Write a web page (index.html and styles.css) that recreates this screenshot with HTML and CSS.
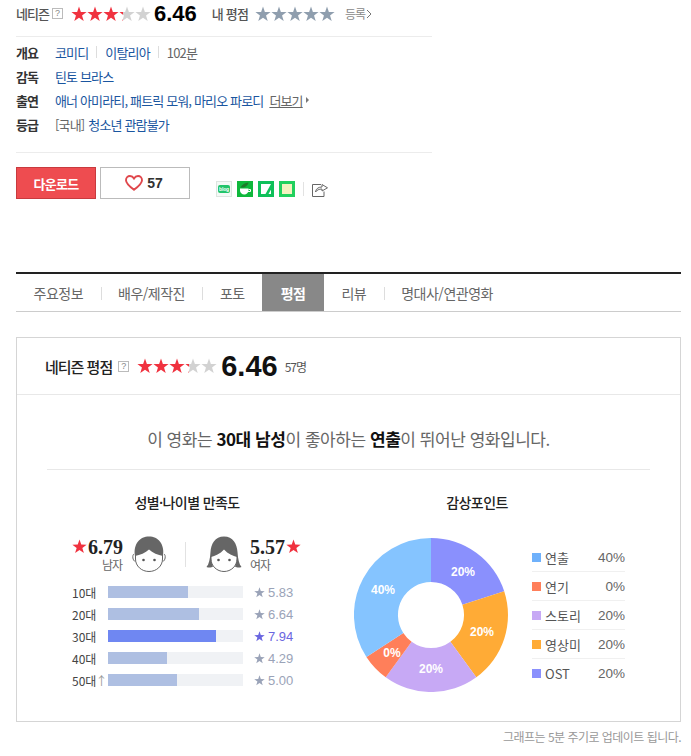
FILE: index.html
```html
<!DOCTYPE html>
<html lang="ko">
<head>
<meta charset="utf-8">
<title>틴토 브라스</title>
<link rel="stylesheet" href="styles.css">
</head>
<body>
<svg class="defs" width="0" height="0" aria-hidden="true">
  <defs>
    <path id="five" d="M8 .5l1.88 5.41 5.72.12-4.56 3.46 1.66 5.48-4.7-3.27-4.7 3.27 1.66-5.48-4.56-3.46 5.72-.12zm16 0l1.88 5.41 5.72.12-4.56 3.46 1.66 5.48-4.7-3.27-4.7 3.27 1.66-5.48-4.56-3.46 5.72-.12zm16 0l1.88 5.41 5.72.12-4.56 3.46 1.66 5.48-4.7-3.27-4.7 3.27 1.66-5.48-4.56-3.46 5.72-.12zm16 0l1.88 5.41 5.72.12-4.56 3.46 1.66 5.48-4.7-3.27-4.7 3.27 1.66-5.48-4.56-3.46 5.72-.12zm16 0l1.88 5.41 5.72.12-4.56 3.46 1.66 5.48-4.7-3.27-4.7 3.27 1.66-5.48-4.56-3.46 5.72-.12z"/>
    <path id="one" d="M8 .5l1.88 5.41 5.72.12-4.56 3.46 1.66 5.48-4.7-3.27-4.7 3.27 1.66-5.48-4.56-3.46 5.72-.12z"/>
    <linearGradient id="rate"><stop offset=".646" stop-color="#f0323f"/><stop offset=".646" stop-color="#d2d2d2"/></linearGradient>
  </defs>
</svg>
<main class="page">
  <section class="top">
    <div class="scores">
      <span class="lbl">네티즌</span><span class="q">?</span>
      <svg class="stars" viewBox="0 0 80 16"><use href="#five" fill="url(#rate)"/></svg>
      <strong class="num">6.46</strong>
      <span class="lbl my">내 평점</span>
      <svg class="stars my-stars" viewBox="0 0 80 16"><use href="#five" fill="#8f9eae"/></svg>
      <a class="reg">등록<svg class="chev" viewBox="0 0 6 10" width="6" height="10"><path d="M1 1l4 4-4 4" fill="none" stroke="#777"/></svg></a>
    </div>
    <dl class="info">
      <div class="row"><dt>개요</dt><dd><a>코미디</a><i></i><a>이탈리아</a><i></i><span>102분</span></dd></div>
      <div class="row"><dt>감독</dt><dd><a>틴토 브라스</a></dd></div>
      <div class="row"><dt>출연</dt><dd><a>애너 아미라티, 패트릭 모워, 마리오 파로디</a><u class="more">더보기</u><span class="tri"></span></dd></div>
      <div class="row"><dt>등급</dt><dd><span>[국내]</span> <a>청소년 관람불가</a></dd></div>
    </dl>
    <div class="actions">
      <button class="down">다운로드</button>
      <button class="like"><svg viewBox="0 0 18 16" width="18" height="16"><path d="M9 14.800C4 11 1 8.400 1 5.200 1 2.800 2.800 1 5 1c1.700 0 3.100.9 4 2.400C9.900 1.900 11.300 1 13 1c2.200 0 4 1.800 4 4.200 0 3.200-3 5.800-8 9.600z" fill="none" stroke="#e0474c" stroke-width="1.900"/></svg><b>57</b></button>
      <div class="sns">
        <span class="ic blog"><span>blog</span></span>
        <span class="ic"><svg viewBox="0 0 16 16"><rect width="16" height="16" fill="#0fb83c"/><path d="M3 7.500h8.500v2a4.250 4 0 0 1-8.500 0z" fill="#fff"/><path d="M11.500 8.500h2v2h-2.500" fill="none" stroke="#fff"/><path d="M3.500 6.500C5 3.500 8 2 11.500 1.500 11 4.500 8 7 3.500 6.500z" fill="#1f7a2c"/></svg></span>
        <span class="ic"><svg viewBox="0 0 16 16"><rect width="16" height="16" fill="#0fc05a"/><rect x="3" y="3" width="10" height="10" fill="#fff"/><path d="M13 3L7.500 13H10.500L13 8.500z" fill="#0fc05a"/></svg></span>
        <span class="ic"><svg viewBox="0 0 16 16"><rect width="16" height="16" fill="#22d05e"/><rect x="3" y="3" width="10" height="10" fill="#f4f2c0"/></svg></span>
        <i class="sep"></i>
        <svg class="share" viewBox="0 0 16 16" width="16" height="16"><path d="M9 3.500H.5v12h11.500v-5" fill="none" stroke="#666"/><path d="M3.500 11c.5-3.500 3-5 6.500-5V3.500L15.500 6.800 10 10V8c-3 0-5 1-6.500 3z" fill="#fff" stroke="#666"/></svg>
      </div>
    </div>
  </section>

  <nav class="tabs">
    <a>주요정보</a><a class="sp">배우/제작진</a><a class="sp">포토</a><a class="on">평점</a><a>리뷰</a><a class="sp">명대사/연관영화</a>
  </nav>

  <section class="panel">
    <header class="phead">
      <h2>네티즌 평점</h2><span class="q q2">?</span>
      <svg class="stars" viewBox="0 0 80 16"><use href="#five" fill="url(#rate)"/></svg>
      <strong class="big">6.46</strong><span class="cnt">57명</span>
    </header>
    <div class="pbody">
      <p class="lead">이 영화는 <b>30대 남성</b>이 좋아하는 <b>연출</b>이 뛰어난 영화입니다.</p>
      <div class="charts">
        <div class="demo">
          <h3>성별·나이별 만족도</h3>
          <div class="gender">
            <div class="g g-m">
              <div class="gtxt"><div class="gscore"><svg viewBox="0 0 16 16" width="15" height="15"><use href="#one" fill="#f0323f"/></svg><b>6.79</b></div><small>남자</small></div>
              <svg class="face" viewBox="0 0 34 36" width="34" height="36"><path d="M2 18c-2 1-1.500 7 1.500 7.500M32 18c2 1 1.500 7-1.500 7.500" fill="none" stroke="#666"/><path d="M3.500 18v5c0 7 6 12.500 13.500 12.500S30.500 30 30.500 23v-5" fill="#fff" stroke="#666"/><path d="M3 20C1 8 8 .5 17 .5S33 8 31 20c-5-1-10.500-3-14-6.500C13.500 17 8 19 3 20z" fill="#666"/><circle cx="11.500" cy="24" r="1.300" fill="#555"/><circle cx="22.500" cy="24" r="1.300" fill="#555"/></svg>
            </div>
            <i class="gdiv"></i>
            <div class="g g-f">
              <svg class="face" viewBox="0 0 36 36" width="36" height="36"><path d="M5 20v3c0 7 6 12.500 13 12.500S31 30 31 23v-3" fill="#fff" stroke="#666"/><path d="M18 .5C9 .5 5 8 4.500 16 4 23 3 28 .5 31c2.500 1 5 .5 6.500-.5C5.500 27 5 24 5 21c4-1 9-3 13-7.500 4 4.500 9 6.500 13 7.500 0 3-.5 6-2 9.500 1.500 1 4 1.500 6.500.5-2.500-3-3.500-8-4-15C31 8 27 .5 18 .5z" fill="#666"/><circle cx="12.500" cy="24" r="1.300" fill="#555"/><circle cx="23.500" cy="24" r="1.300" fill="#555"/></svg>
              <div class="gtxt"><div class="gscore"><b>5.57</b><svg viewBox="0 0 16 16" width="15" height="15"><use href="#one" fill="#f0323f"/></svg></div><small>여자</small></div>
            </div>
          </div>
          <ul class="bars">
            <li><span class="age">10대</span><span class="track"><span class="fill" style="width:59.300%"></span></span><span class="val"><svg viewBox="0 0 16 16" width="11" height="11"><use href="#one" fill="currentColor"/></svg>5.83</span></li>
            <li><span class="age">20대</span><span class="track"><span class="fill" style="width:67.400%"></span></span><span class="val"><svg viewBox="0 0 16 16" width="11" height="11"><use href="#one" fill="currentColor"/></svg>6.64</span></li>
            <li class="best"><span class="age">30대</span><span class="track"><span class="fill" style="width:80%"></span></span><span class="val"><svg viewBox="0 0 16 16" width="11" height="11"><use href="#one" fill="currentColor"/></svg>7.94</span></li>
            <li><span class="age">40대</span><span class="track"><span class="fill" style="width:43.700%"></span></span><span class="val"><svg viewBox="0 0 16 16" width="11" height="11"><use href="#one" fill="currentColor"/></svg>4.29</span></li>
            <li><span class="age">50대<em>↑</em></span><span class="track"><span class="fill" style="width:51.100%"></span></span><span class="val"><svg viewBox="0 0 16 16" width="11" height="11"><use href="#one" fill="currentColor"/></svg>5.00</span></li>
          </ul>
        </div>
        <div class="points">
          <h3>감상포인트</h3>
          <div class="pie-wrap">
            <svg class="pie" viewBox="-77 -77 154 154" width="154" height="154">
              <path d="M0-77A77 77 0 0 1 73.200-23.800L31.400-10.200A33 33 0 0 0 0-33z" fill="#8a90fd"/>
              <path d="M73.200-23.800A77 77 0 0 1 45.300 62.300L19.400 26.700A33 33 0 0 0 31.400-10.200z" fill="#ffab36"/>
              <path d="M45.300 62.300A77 77 0 0 1-45.300 62.300L-19.400 26.700A33 33 0 0 0 19.400 26.700z" fill="#c7a9f5"/>
              <path d="M-45.300 62.300A77 77 0 0 1-64.600 42L-27.700 18A33 33 0 0 0-19.400 26.700z" fill="#ff7f5a"/>
              <path d="M-64.600 42A77 77 0 0 1 0-77L0-33A33 33 0 0 0-27.700 18z" fill="#85c4ff"/>
              <g class="pl">
                <text x="32" y="-39">20%</text>
                <text x="51" y="21">20%</text>
                <text x="0" y="58">20%</text>
                <text x="-39" y="42">0%</text>
                <text x="-48" y="-21">40%</text>
              </g>
            </svg>
            <ul class="legend">
              <li><i class="c1"></i><span>연출</span><b>40%</b></li>
              <li><i class="c2"></i><span>연기</span><b>0%</b></li>
              <li><i class="c3"></i><span>스토리</span><b>20%</b></li>
              <li><i class="c4"></i><span>영상미</span><b>20%</b></li>
              <li><i class="c5"></i><span>OST</span><b>20%</b></li>
            </ul>
          </div>
        </div>
      </div>
    </div>
  </section>
  <p class="note">그래프는 5분 주기로 업데이트 됩니다.</p>
</main>
</body>
</html>
```
FILE: styles.css
```css
* { box-sizing: border-box; }
html, body { margin: 0; padding: 0; background: #fff; }
body { font-family: "Noto Sans CJK KR", "Liberation Sans", sans-serif; font-size: 13px; color: #333; letter-spacing: -1px; }
.defs { position: absolute; }
.page { width: 665px; margin-left: 16px; }
a { color: #1a56a0; }
h2, h3, p, ul, dl, dd { margin: 0; padding: 0; }
ul { list-style: none; }
i { font-style: normal; }

.top { width: 416px; height: 272px; }
.scores { display: flex; align-items: center; height: 37px; padding-bottom: 9px; border-bottom: 1px solid #ececec; }
.lbl { color: #555; font-weight: 500; line-height: 18px; }
.q { width: 11px; height: 11px; margin-left: 3px; border: 1px solid #bbb; color: #888; font: 9px/9px "Liberation Sans", sans-serif; letter-spacing: 0; text-align: center; }
.stars { width: 80px; height: 16px; margin-left: 8px; flex: none; }
.num { margin-left: 3px; font: bold 22px/24px "Liberation Sans", sans-serif; letter-spacing: 0; color: #000; }
.my { margin-left: 15px; letter-spacing: -.8px; }
.my-stars { margin-left: 7px; }
.reg { margin-left: 10px; color: #888; font-size: 12px; display: flex; align-items: center; gap: 1px; }
.chev { margin-top: 1px; }

.info { height: 116px; padding-top: 3px; margin: 0; border-bottom: 1px solid #ececec; }
.row { display: flex; height: 24px; align-items: center; }
dt { width: 39px; font-weight: 700; color: #333; }
dd { display: flex; align-items: center; gap: 4px; color: #666; letter-spacing: -.85px; }
dd i { width: 1px; height: 12px; margin: 0 4px; background: #ddd; }
.more { margin-left: 2px; color: #666; }
.tri { width: 0; height: 0; margin-left: -1px; border-left: 3px solid #777; border-top: 3px solid transparent; border-bottom: 3px solid transparent; }

.actions { display: flex; margin-top: 14px; height: 32px; }
.actions button { font-family: inherit; cursor: pointer; padding: 0; }
.down { width: 80px; height: 32px; background: #ee4c50; border: 1px solid #c83a3e; color: #fff; font-size: 13px; font-weight: 700; letter-spacing: -.7px; }
.like { display: flex; align-items: center; justify-content: center; gap: 4px; width: 90px; height: 32px; margin-left: 4px; background: #fff; border: 1px solid #bbb; }
.actions .like { padding: 0 2px 0 0; }
.like b { font: bold 14px "Liberation Sans", sans-serif; letter-spacing: 0; color: #333; }
.sns { display: flex; align-items: center; gap: 5px; margin: 14px 0 0 26px; height: 16px; }
.ic { display: block; width: 16px; height: 16px; }
.ic svg { display: block; width: 16px; height: 16px; }
.blog { display: flex; align-items: center; justify-content: center; border: 1px solid #dde5e0; background: #f4f9f6; }
.blog span { display: block; width: 12px; height: 8px; border-radius: 2px; background: #22c46a; color: #fff; font: bold 5px/8px "Liberation Sans", sans-serif; letter-spacing: -.2px; text-align: center; }
.sep { width: 1px; height: 14px; margin: 0 3px; background: #e2e2e2; }
.share { display: block; }

.tabs { display: flex; height: 40px; border-top: 2px solid #222; border-bottom: 1px solid #ccc; }
.tabs a { display: flex; align-items: center; height: 37px; padding: 0 17.5px; font-size: 14px; color: #666; position: relative; letter-spacing: -.5px; }
.tabs .sp::before { content: ""; position: absolute; left: 0; top: 13px; width: 1px; height: 13px; background: #ddd; }
.tabs .on { background: #888; color: #fff; font-weight: 700; padding: 0 18.5px; }

.panel { margin-top: 25px; height: 385px; border: 1px solid #d5d5d5; }
.phead { display: flex; align-items: center; height: 57px; padding-left: 28px; border-bottom: 1px solid #e8e8e8; }
h2 { font-size: 15px; font-weight: 500; color: #222; letter-spacing: -1px; }
.q2 { margin-left: 6px; }
.phead .stars { margin-left: 8px; }
.big { margin-left: 4px; font: bold 29px/32px "Liberation Sans", sans-serif; letter-spacing: 0; color: #111; }
.cnt { margin-left: 7px; font-size: 12px; color: #555; }

.pbody { padding: 0 30px; }
.lead { height: 75px; padding-top: 29px; text-align: center; font-size: 17px; line-height: 30px; color: #666; letter-spacing: -.46px; border-bottom: 1px solid #e8e8e8; }
.lead b { color: #111; }
.charts { display: flex; }
.demo { width: 250px; margin-left: 0; }
h3 { margin-top: 22px; font-size: 14px; font-weight: 500; line-height: 20px; color: #222; text-align: center; letter-spacing: -.6px; }
.demo h3 { margin-right: 0; width: 280px; }
.gender { display: flex; align-items: center; width: 230px; height: 36px; margin: 24px 0 0 25px; }
.g { display: flex; align-items: center; }
.gtxt { width: 52px; }
.gscore { display: flex; align-items: center; gap: 1px; }
.gscore b { font: bold 20px/20px "Liberation Serif", serif; letter-spacing: 0; color: #222; }
.gtxt small { display: block; font-size: 12px; line-height: 15px; color: #666; }
.g-m .gtxt { text-align: right; width: 51px; }
.g-m small { padding-right: 1px; }
.g-m .gscore { justify-content: flex-end; }
.g-m .face { margin-left: 9px; }
.g-f .face { margin-right: 8px; }
.gdiv { width: 1px; height: 25px; margin: 0 20px 0 19px; background: #e2e2e2; }
.bars { margin: 9px 0 0 25px; width: 230px; }
.bars li { display: flex; align-items: center; height: 22px; }
.age { width: 36px; font-size: 12px; color: #444; letter-spacing: 0; white-space: nowrap; }
.age em { font-style: normal; color: #999; margin-left: -1px; }
.track { display: block; width: 135px; height: 12px; background: #f0f2f5; }
.fill { display: block; height: 12px; background: #aebfe2; }
.val { display: flex; align-items: center; gap: 3px; margin-left: 11px; font: 13px "Liberation Sans", sans-serif; letter-spacing: 0; color: #9aa3b8; }
.best .fill { background: #6f87f2; }
.best .val { color: #6a66e0; }

.points { flex: 1; }
.points h3 { width: 100%; margin-left: 0; padding-left: 7px; }
.pie-wrap { display: flex; align-items: flex-start; margin: 26px 0 0 57px; }
.pie { display: block; flex: none; }
.pl text { font: bold 12px "Liberation Sans", sans-serif; letter-spacing: 0; fill: #fff; text-anchor: middle; }
.legend { width: 93px; margin: 5px 0 0 24px; }
.legend li { display: flex; align-items: center; height: 29px; border-bottom: 1px solid #f0f0f0; font-size: 13px; color: #555; letter-spacing: 0; }
.legend li:last-child { border-bottom: 0; }
.legend i { width: 9px; height: 9px; margin-right: 4px; }
.legend span { flex: 1; }
.legend b { font: 13.500px "Liberation Sans", sans-serif; color: #666; }
.c1 { background: #6fb1fb; }
.c2 { background: #ff7f5a; }
.c3 { background: #c7a9f5; }
.c4 { background: #ffab36; }
.c5 { background: #8a90fd; }

.note { margin-top: 7px; text-align: right; font-size: 12px; line-height: 16px; color: #999; letter-spacing: -.53px; }
```
